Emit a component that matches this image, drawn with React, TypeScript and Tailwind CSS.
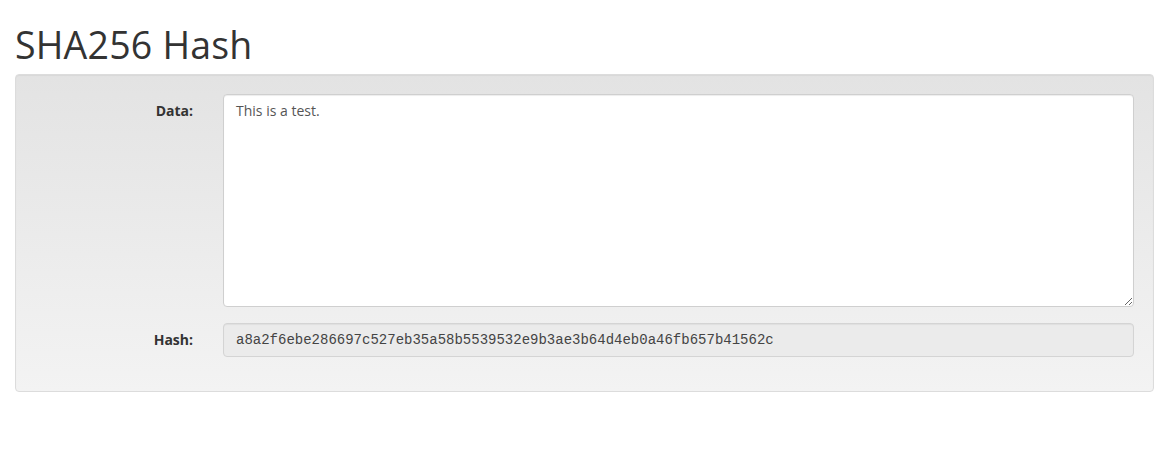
export default function App() {
  return (
    <div className="min-h-[459px] bg-white px-[15px] pt-[20px] font-['Open_Sans',sans-serif] text-[#333]">
      <h1 className="text-[37.5px] leading-[50px] font-normal tracking-[0.2px] text-[#333] mb-[4px]">
        SHA256 Hash
      </h1>

      <div className="rounded-[4px] border border-[#dcdcdc] bg-gradient-to-b from-[#e3e3e3] to-[#f3f3f3] pl-[20px] pr-[19px] pt-[19px] pb-[34px] shadow-[inset_0_1px_1px_rgba(0,0,0,0.05)]">
        <div className="flex">
          <label className="w-[157px] shrink-0 pt-[6px] text-right text-[14px] font-bold text-[#333]">
            Data:
          </label>
          <div className="ml-[30px] flex-1">
            <textarea
              defaultValue="This is a test."
              className="block h-[213px] w-full resize-y rounded-[4px] border border-[#cfcfcf] bg-white px-[12px] py-[6px] text-[14px] leading-[20px] text-[#555] shadow-[inset_0_1px_1px_rgba(0,0,0,0.075)] outline-none"
            />
          </div>
        </div>

        <div className="mt-[16px] flex">
          <label className="w-[157px] shrink-0 pt-[6px] text-right text-[14px] font-bold text-[#333]">
            Hash:
          </label>
          <div className="ml-[30px] flex-1">
            <div className="flex h-[34px] w-full items-center rounded-[4px] border border-[#d4d4d4] bg-[#ebebeb] px-[12px] font-['Liberation_Mono',monospace] text-[14px] text-[#444] shadow-[inset_0_1px_1px_rgba(0,0,0,0.05)]">
              a8a2f6ebe286697c527eb35a58b5539532e9b3ae3b64d4eb0a46fb657b41562c
            </div>
          </div>
        </div>
      </div>
    </div>
  )
}
